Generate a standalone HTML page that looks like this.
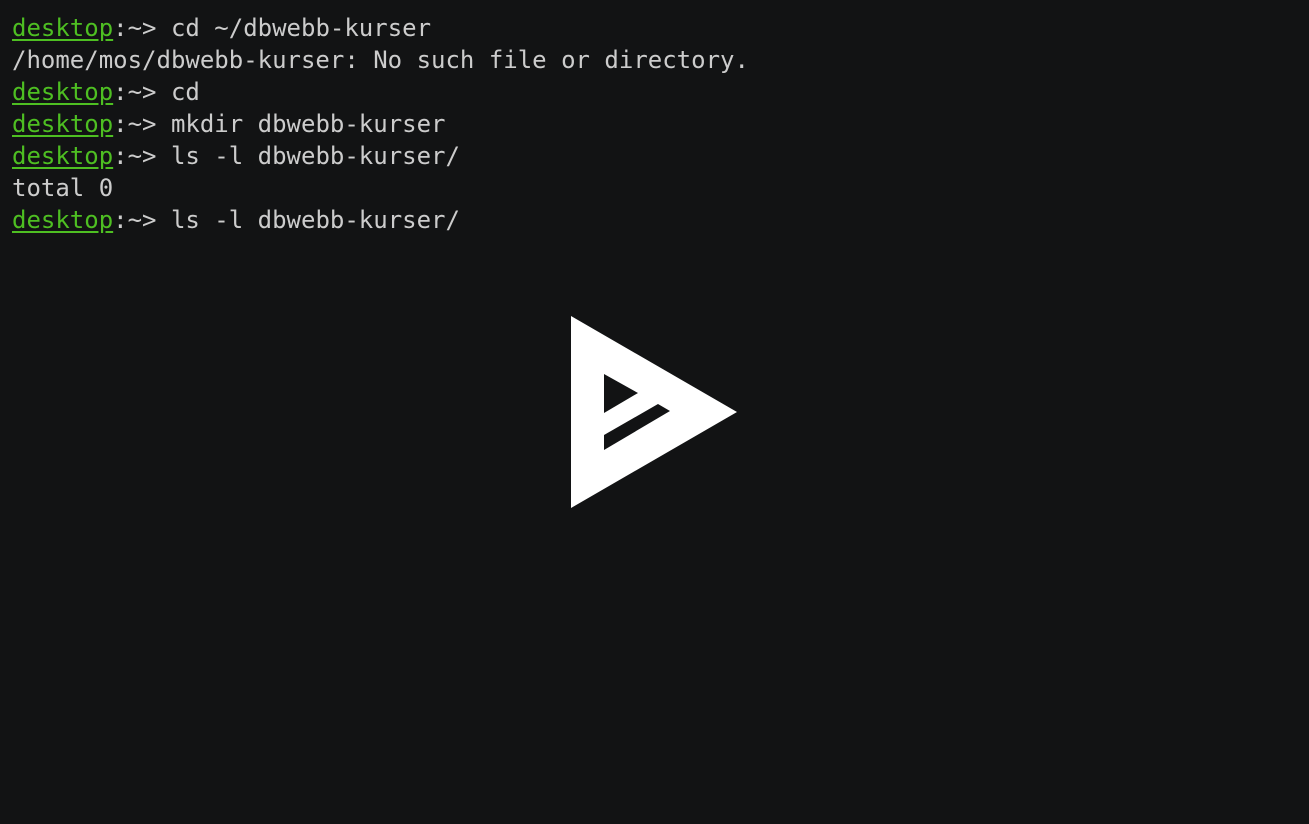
<!DOCTYPE html>
<html><head><style>
html,body{margin:0;padding:0;background:#121314;width:1309px;height:824px;overflow:hidden}
pre{margin:0;position:absolute;left:12px;top:12px;font-family:"DejaVu Sans Mono","Liberation Mono",monospace;font-size:24px;line-height:32px;color:#cccccc}
.g{color:#4ebf22;text-decoration:underline;text-underline-offset:3px}
svg{position:absolute;left:0;top:0}
</style></head><body>
<pre><span class="g">desktop</span>:~&gt; cd ~/dbwebb-kurser
/home/mos/dbwebb-kurser: No such file or directory.
<span class="g">desktop</span>:~&gt; cd
<span class="g">desktop</span>:~&gt; mkdir dbwebb-kurser
<span class="g">desktop</span>:~&gt; ls -l dbwebb-kurser/
total 0
<span class="g">desktop</span>:~&gt; ls -l dbwebb-kurser/</pre>
<svg width="1309" height="824">
<polygon points="571,316 737,412 571,508" fill="#fff"/>
<polygon points="604,374 638,393 604,413" fill="#121314"/>
<polygon points="604,435 658,404 670,411 604,450" fill="#121314"/>
</svg>
</body></html>
